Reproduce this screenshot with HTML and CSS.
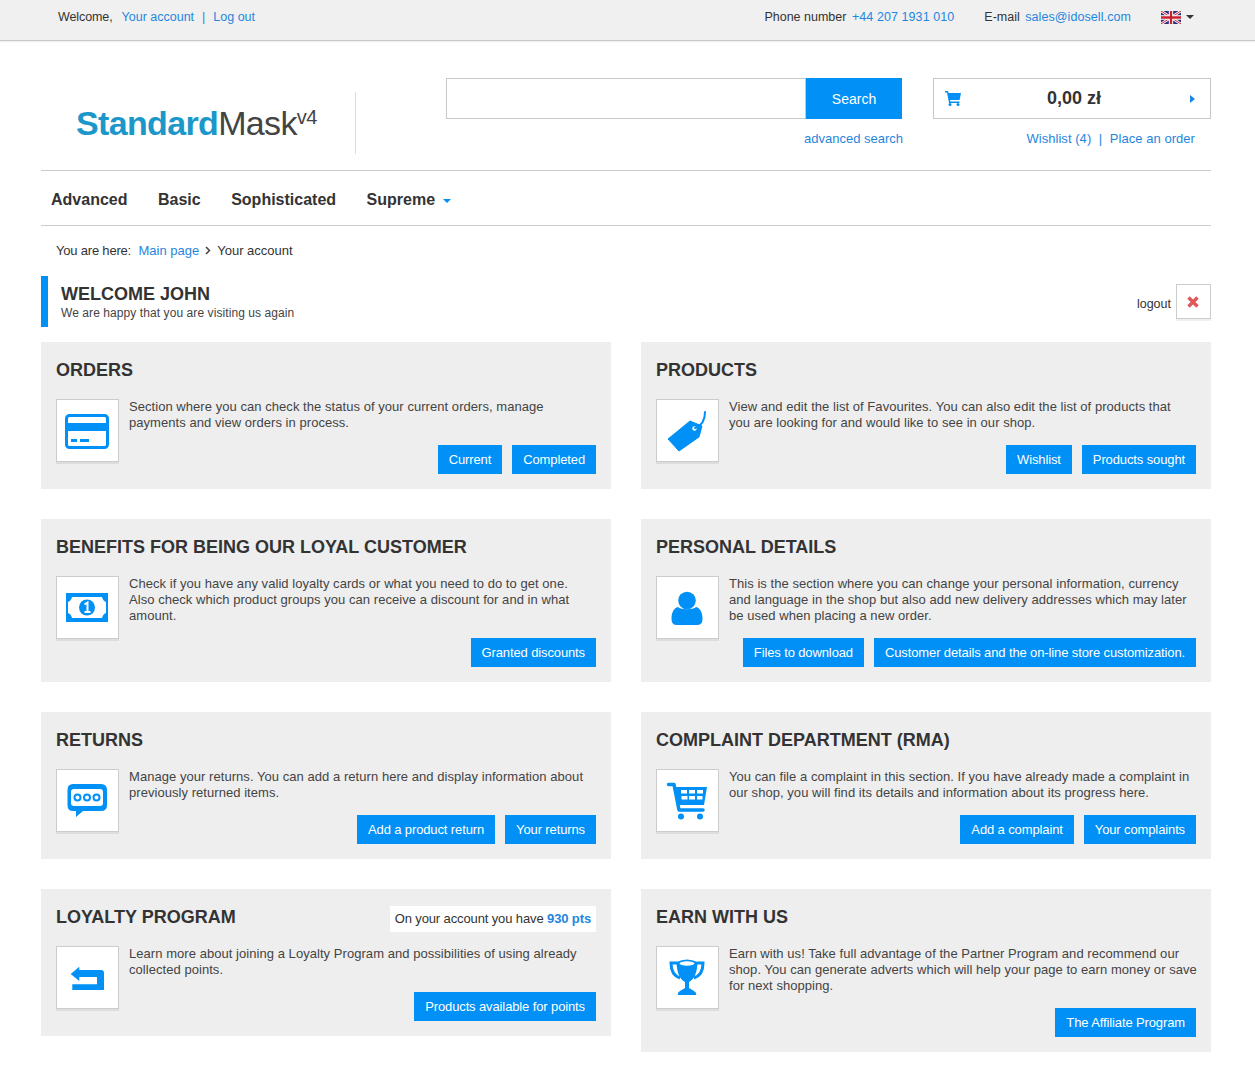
FILE: index.html
```html
<!DOCTYPE html>
<html lang="en">
<head>
<meta charset="utf-8">
<title>Your account</title>
<link rel="stylesheet" href="styles.css">
</head>
<body>
<div class="topbar">
  <div class="wrap topbar-in">
    <div class="top-left"><span class="welcome">Welcome,</span><a href="#">Your account</a><span class="sep">|</span><a href="#">Log out</a></div>
    <div class="top-right">
      <span class="contact">Phone number <a href="#">+44 207 1931 010</a></span>
      <span class="contact">E-mail <a href="#">sales@idosell.com</a></span>
      <span class="lang">
        <svg class="flag" width="20" height="13" viewBox="0 0 60 39"><rect width="60" height="39" fill="#2b2f7a"/><path d="M0 0L60 39M60 0L0 39" stroke="#fff" stroke-width="8"/><path d="M0 0L60 39M60 0L0 39" stroke="#c8202f" stroke-width="3"/><path d="M30 0V39M0 19.5H60" stroke="#fff" stroke-width="13"/><path d="M30 0V39M0 19.5H60" stroke="#c8202f" stroke-width="7"/></svg>
        <span class="caret-dark"></span>
      </span>
    </div>
  </div>
</div>

<div class="wrap">
  <header class="header">
    <div class="logo"><span class="logo-a">Standard</span><span class="logo-b">Mask</span><sup class="logo-v">v4</sup></div>
    <div class="search">
      <div class="search-row"><div class="search-input"></div><div class="search-btn">Search</div></div>
      <a class="adv" href="#">advanced search</a>
    </div>
    <div class="cart">
      <div class="cart-box">
        <svg class="cart-ico" width="16" height="15" viewBox="0 0 16 15"><path d="M0 0H3L3.6 2H16L14.6 9H5L5.3 10.5H14.5V12H4L2 1.5H0Z" fill="#0090f6"/><circle cx="5" cy="13.5" r="1.5" fill="#0090f6"/><circle cx="13" cy="13.5" r="1.5" fill="#0090f6"/></svg>
        <span class="cart-sum">0,00 zł</span>
        <span class="cart-arrow"></span>
      </div>
      <div class="cart-links"><a href="#">Wishlist (4)</a><span class="sep">|</span><a href="#">Place an order</a></div>
    </div>
  </header>

  <nav class="nav">
    <a href="#">Advanced</a><a href="#">Basic</a><a href="#">Sophisticated</a><a href="#">Supreme<span class="caret-blue"></span></a>
  </nav>

  <div class="crumbs"><span class="crumb-label">You are here:</span><a href="#">Main page</a><svg class="crumb-sep" width="6" height="9" viewBox="0 0 6 9"><path d="M1 1L4.5 4.5L1 8" fill="none" stroke="#444" stroke-width="1.5"/></svg><span>Your account</span></div>

  <div class="welcome-bar">
    <div class="welcome-text">
      <h1>WELCOME JOHN</h1>
      <p>We are happy that you are visiting us again</p>
    </div>
    <div class="logout"><span>logout</span><a class="logout-x" href="#"><svg width="12" height="12" viewBox="0 0 12 12"><path d="M1.5 1.5L10.5 10.5M10.5 1.5L1.5 10.5" stroke="#e05858" stroke-width="3.4"/></svg></a></div>
  </div>

  <main class="grid">
    <section class="card">
      <div class="card-head"><h2>ORDERS</h2></div>
      <div class="card-body">
        <div class="icon"><svg width="61" height="61" viewBox="1 1 61 61"><rect x="10.5" y="16.5" width="41" height="32" rx="3" fill="#fff" stroke="#0090f6" stroke-width="3"/><rect x="11" y="24" width="40" height="8" fill="#0090f6"/><rect x="15" y="40" width="6" height="3" fill="#0090f6"/><rect x="24" y="40" width="9" height="3" fill="#0090f6"/></svg></div>
        <p>Section where you can check the status of your current orders, manage payments and view orders in process.</p>
        <div class="btns"><a href="#">Current</a><a href="#">Completed</a></div>
      </div>
    </section>

    <section class="card">
      <div class="card-head"><h2>PRODUCTS</h2></div>
      <div class="card-body">
        <div class="icon"><svg width="61" height="61" viewBox="1 1 61 61"><path d="M12 40L34 22L46 27L43 38L23 52Z" fill="#0090f6" stroke="#0090f6" stroke-width="1" stroke-linejoin="round"/><circle cx="38.5" cy="29.5" r="2.2" fill="#fff"/><path d="M39 29C45 27 49 22 49 13" fill="none" stroke="#0090f6" stroke-width="2" stroke-linecap="round"/></svg></div>
        <p>View and edit the list of Favourites. You can also edit the list of products that<br>you are looking for and would like to see in our shop.</p>
        <div class="btns"><a href="#">Wishlist</a><a href="#">Products sought</a></div>
      </div>
    </section>

    <section class="card">
      <div class="card-head"><h2>BENEFITS FOR BEING OUR LOYAL CUSTOMER</h2></div>
      <div class="card-body">
        <div class="icon"><svg width="61" height="61" viewBox="1 1 61 61"><rect x="10" y="17" width="42" height="29" fill="#0090f6"/><path d="M16 21H46Q47 25 50 26V37Q47 38 46 42H16Q15 38 12 37V26Q15 25 16 21Z" fill="#fff"/><circle cx="31" cy="31.5" r="8" fill="#0090f6"/><path d="M28.5 28.5L31.5 26.5V36M28.5 36H34.5" fill="none" stroke="#fff" stroke-width="2"/></svg></div>
        <p>Check if you have any valid loyalty cards or what you need to do to get one.<br>Also check which product groups you can receive a discount for and in what amount.</p>
        <div class="btns"><a href="#">Granted discounts</a></div>
      </div>
    </section>

    <section class="card">
      <div class="card-head"><h2>PERSONAL DETAILS</h2></div>
      <div class="card-body">
        <div class="icon"><svg width="61" height="61" viewBox="1 1 61 61"><circle cx="31" cy="24.5" r="8.8" fill="#0090f6"/><path d="M15.5 43C15.5 36 18 32 22 31C25 34 37 34 40 31C44 32 46.5 36 46.5 43Q46.5 49 41 49H21Q15.5 49 15.5 43Z" fill="#0090f6"/></svg></div>
        <p>This is the section where you can change your personal information, currency and language in the shop but also add new delivery addresses which may later be used when placing a new order.</p>
        <div class="btns"><a href="#">Files to download</a><a href="#">Customer details and the on-line store customization.</a></div>
      </div>
    </section>

    <section class="card">
      <div class="card-head"><h2>RETURNS</h2></div>
      <div class="card-body">
        <div class="icon"><svg width="61" height="61" viewBox="1 1 61 61"><path d="M17 15H45Q51 15 51 21V36Q51 42 45 42H27L20 48V42H17Q11.500 42 11.500 36V21Q11.500 15 17 15Z" fill="#0090f6"/><rect x="15" y="20" width="32" height="17" rx="3" fill="#fff"/><g fill="none" stroke="#0090f6" stroke-width="2"><circle cx="21.500" cy="28.500" r="3"/><circle cx="31" cy="28.500" r="3"/><circle cx="40.500" cy="28.500" r="3"/></g></svg></div>
        <p>Manage your returns. You can add a return here and display information about previously returned items.</p>
        <div class="btns"><a href="#">Add a product return</a><a href="#">Your returns</a></div>
      </div>
    </section>

    <section class="card">
      <div class="card-head"><h2>COMPLAINT DEPARTMENT (RMA)</h2></div>
      <div class="card-body">
        <div class="icon"><svg width="61" height="61" viewBox="1 1 61 61"><path d="M12.500 15.500H18L23 41H47" fill="none" stroke="#0090f6" stroke-width="3.500" stroke-linecap="round" stroke-linejoin="round"/><path d="M19.500 18H51L48 36H23Z" fill="#0090f6"/><g fill="#fff"><rect x="25" y="21" width="6" height="3.500"/><rect x="33" y="21" width="6" height="3.500"/><rect x="41" y="21" width="6" height="3.500"/><rect x="25.500" y="27" width="6" height="3.500"/><rect x="33" y="27" width="6" height="3.500"/><rect x="41" y="27" width="5.500" height="3.500"/></g><circle cx="25" cy="47.500" r="3" fill="#0090f6"/><circle cx="44" cy="47.500" r="3" fill="#0090f6"/></svg></div>
        <p>You can file a complaint in this section. If you have already made a complaint in our shop, you will find its details and information about its progress here.</p>
        <div class="btns"><a href="#">Add a complaint</a><a href="#">Your complaints</a></div>
      </div>
    </section>

    <section class="card">
      <div class="card-head"><h2>LOYALTY PROGRAM</h2><div class="points">On your account you have <b>930 pts</b></div></div>
      <div class="card-body">
        <div class="icon"><svg width="61" height="61" viewBox="1 1 61 61"><path d="M14.700 28L23.300 20.700V24H45Q48 24 48 27V44H16.300V38.300H41V31H23.300V35Z" fill="#0090f6"/></svg></div>
        <p>Learn more about joining a Loyalty Program and possibilities of using already collected points.</p>
        <div class="btns"><a href="#">Products available for points</a></div>
      </div>
    </section>

    <section class="card">
      <div class="card-head"><h2>EARN WITH US</h2></div>
      <div class="card-body">
        <div class="icon"><svg width="61" height="61" viewBox="1 1 61 61"><path d="M21 17H15Q15 29 24 32" fill="none" stroke="#0090f6" stroke-width="3"/><path d="M41 17H47Q47 29 38 32" fill="none" stroke="#0090f6" stroke-width="3"/><path d="M20.500 16Q31 11 41.500 16Q41 32 33 36V42L38 45Q41 47 40 49H22Q21 47 24 45L29 42V36Q21 32 20.500 16Z" fill="#0090f6"/><ellipse cx="31" cy="17.500" rx="7.500" ry="2.200" fill="#fff"/></svg></div>
        <p>Earn with us! Take full advantage of the Partner Program and recommend our shop. You can generate adverts which will help your page to earn money or save for next shopping.</p>
        <div class="btns"><a href="#">The Affiliate Program</a></div>
      </div>
    </section>
  </main>
</div>
</body>
</html>
```
FILE: styles.css
```css
* { box-sizing: border-box; }
html, body { margin: 0; padding: 0; }
body { background: #fff; color: #333; font-family: "Liberation Sans", Arial, sans-serif; font-size: 13px; }
a { color: #1f86e0; text-decoration: none; }
h1, h2, p { margin: 0; }

.wrap { width: 1170px; margin-left: 41px; }

.topbar { height: 41px; background: #f0f0f0; border-bottom: 1px solid #c8c8c8; box-shadow: 0 1px 1px #f2f2f2; font-size: 12.5px; color: #333; }
.topbar-in { display: flex; justify-content: space-between; height: 33px; align-items: center; }
.top-left { padding-left: 17px; display: flex; align-items: center; }
.welcome { margin-right: 9px; letter-spacing: -0.1px; }
.sep { color: #1f86e0; margin: 0 8px; }
.top-right { display: flex; align-items: center; padding-right: 17px; }
.contact { margin-right: 30px; }
.contact a { margin-left: 2px; letter-spacing: 0.08px; }
.lang { display: flex; align-items: center; gap: 5px; }
.flag { margin-top: 1px; }
.caret-dark { width: 0; height: 0; border: 4px solid transparent; border-top-color: #333; border-bottom-width: 0; }

.header { display: flex; height: 130px; padding-top: 37px; border-bottom: 1px solid #ccc; }
.logo { width: 315px; height: 62px; margin-top: 14px; padding-left: 35px; border-right: 1px solid #ddd; font-size: 34px; line-height: 62px; white-space: nowrap; letter-spacing: -0.65px; }
.logo-a { color: #1b98c9; font-weight: bold; }
.logo-b { color: #444; }
.logo-v { color: #444; font-size: 20px; line-height: 0; vertical-align: 11px; }
.search { margin-left: 90px; width: 457px; display: flex; flex-direction: column; }
.search-row { display: flex; width: 456px; height: 41px; }
.search-input { flex: 1; border: 1px solid #c8c8c8; background: #fff; }
.search-btn { width: 96px; background: #0090f6; color: #fff; font-size: 14px; display: flex; align-items: center; justify-content: center; }
.adv { align-self: flex-end; margin-top: 12px; font-size: 13px; line-height: 16px; }
.cart { margin-left: 30px; width: 278px; display: flex; flex-direction: column; }
.cart-box { height: 41px; border: 1px solid #c8c8c8; display: flex; align-items: center; padding: 0 15px 0 11px; }
.cart-sum { flex: 1; text-align: center; font-size: 18px; font-weight: bold; color: #333; margin-right: 3px; }
.cart-arrow { width: 0; height: 0; border: 4px solid transparent; border-left: 5px solid #1f86e0; border-right-width: 0; }
.cart-links { margin-top: 12px; padding-right: 16px; text-align: right; font-size: 13px; line-height: 16px; letter-spacing: 0.05px; }
.cart-links .sep { margin: 0 7.5px; }

.nav { display: flex; height: 55px; align-items: center; gap: 30.5px; padding: 4px 0 0 10px; border-bottom: 1px solid #ccc; }
.nav a { color: #333; font-size: 16px; font-weight: bold; display: flex; align-items: center; }
.caret-blue { width: 0; height: 0; margin-left: 8px; margin-top: 2px; border: 4px solid transparent; border-top-color: #0090f6; border-bottom-width: 0; }

.crumbs { display: flex; align-items: center; height: 50px; padding: 0 0 1px 15px; font-size: 13px; }
.crumb-label { letter-spacing: -0.2px; }
.crumbs a { margin-left: 7.5px; }
.crumb-sep { margin: 0 6.5px 0 5.5px; }

.welcome-bar { display: flex; justify-content: space-between; align-items: center; height: 51px; border-left: 7px solid #0090f6; padding-left: 13px; }
.welcome-text h1 { font-size: 18px; line-height: 22px; color: #333; }
.welcome-text p { font-size: 12px; line-height: 14px; margin-top: 1px; letter-spacing: 0.08px; color: #444; }
.logout { display: flex; align-items: center; gap: 5px; font-size: 12.5px; color: #333; }
.logout span { margin-top: 4px; }
.logout-x { width: 35px; height: 35px; padding-right: 2px; border: 1px solid #ccc; display: flex; align-items: center; justify-content: center; box-shadow: 0 2px 0 #f0f0f0; }

.grid { display: grid; grid-template-columns: 570px 570px; gap: 30px; margin-top: 15px; align-items: start; }
.card { background: #eee; padding: 15px; }
.card-head { height: 42px; display: flex; justify-content: space-between; align-items: flex-start; }
.card-head h2 { font-size: 18px; line-height: 26px; color: #333; }
.points { margin-top: 2px; height: 26px; line-height: 26px; padding: 0 5px; background: #fff; font-size: 13px; letter-spacing: -0.12px; color: #333; }
.points b { color: #1f86e0; }
.card-body { display: grid; grid-template-columns: 63px 1fr; column-gap: 10px; }
.icon { grid-row: 1 / span 2; width: 63px; height: 63px; background: #fff; border: 1px solid #ccc; box-shadow: 0 2px 0 #ddd; }
.icon svg { display: block; }
.card-body p { font-size: 13px; line-height: 16px; letter-spacing: 0.05px; color: #444; margin-right: -5px; }
.btns { display: flex; justify-content: flex-end; gap: 10px; margin-top: 14px; }
.btns a { height: 29px; line-height: 30px; padding: 0 11px; background: #0090f6; color: #fff; font-size: 13px; letter-spacing: -0.12px; white-space: nowrap; }
```
